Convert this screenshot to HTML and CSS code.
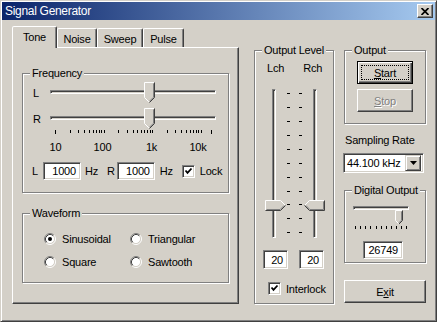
FILE: index.html
```html
<!DOCTYPE html>
<html>
<head>
<meta charset="utf-8">
<title>Signal Generator</title>
<link rel="stylesheet" href="styles.css">
</head>
<body>
<div class="window">
  <div class="titlebar">
    <span class="title">Signal Generator</span>
    <span class="close"><svg width="8" height="7" viewBox="0 0 8 7"><path d="M0.5 0 L7.5 7 M7.5 0 L0.5 7" stroke="#000" stroke-width="1.7"/></svg></span>
  </div>
  <div class="main">
    <div class="tabctl">
      <div class="tabs">
        <div class="tab active t-tone">Tone</div>
        <div class="tab t-noise">Noise</div>
        <div class="tab t-sweep">Sweep</div>
        <div class="tab t-pulse">Pulse</div>
      </div>
      <div class="panel">
        <fieldset class="group freq">
          <legend>Frequency</legend>
          <div class="srow first">
            <span class="slabel">L</span>
            <div class="hslider">
              <div class="track"></div>
              <svg class="thumb" style="left:99px" width="11" height="21" viewBox="0 0 11 21">
                <path d="M0.5 15.5V0.5H10.5V15.5L5.5 20.5Z" fill="#D4D0C8"/>
                <path d="M0.5 15.5V0.5H10" stroke="#fff" fill="none"/>
                <path d="M0.5 15.5L5 20" stroke="#fff" fill="none"/>
                <path d="M10.5 0.5V15.5L5.5 20.5" stroke="#404040" fill="none"/>
                <path d="M9.5 1.5V15.2L5.5 19.2" stroke="#808080" fill="none"/>
              </svg>
            </div>
          </div>
          <div class="srow">
            <span class="slabel">R</span>
            <div class="hslider">
              <div class="track"></div>
              <svg class="thumb" style="left:99px" width="11" height="21" viewBox="0 0 11 21">
                <path d="M0.5 15.5V0.5H10.5V15.5L5.5 20.5Z" fill="#D4D0C8"/>
                <path d="M0.5 15.5V0.5H10" stroke="#fff" fill="none"/>
                <path d="M0.5 15.5L5 20" stroke="#fff" fill="none"/>
                <path d="M10.5 0.5V15.5L5.5 20.5" stroke="#404040" fill="none"/>
                <path d="M9.5 1.5V15.2L5.5 19.2" stroke="#808080" fill="none"/>
              </svg>
            </div>
          </div>
          <svg class="scale" width="205" height="25" viewBox="0 0 205 25">
            <g fill="#000">
              <rect x="32" y="1" width="1" height="4"/>
              <rect x="47" y="1" width="1" height="3"/><rect x="55" y="1" width="1" height="3"/><rect x="61" y="1" width="1" height="3"/><rect x="66" y="1" width="1" height="3"/><rect x="70" y="1" width="1" height="3"/><rect x="73" y="1" width="1" height="3"/><rect x="76" y="1" width="1" height="3"/><rect x="78" y="1" width="1" height="3"/>
              <rect x="81" y="1" width="1" height="3"/><rect x="95" y="1" width="1" height="3"/><rect x="104" y="1" width="1" height="3"/><rect x="110" y="1" width="1" height="3"/><rect x="114" y="1" width="1" height="3"/><rect x="118" y="1" width="1" height="3"/><rect x="121" y="1" width="1" height="3"/><rect x="124" y="1" width="1" height="3"/><rect x="127" y="1" width="1" height="3"/>
              <rect x="129" y="1" width="1" height="3"/><rect x="144" y="1" width="1" height="3"/><rect x="152" y="1" width="1" height="3"/><rect x="158" y="1" width="1" height="3"/><rect x="163" y="1" width="1" height="3"/><rect x="167" y="1" width="1" height="3"/><rect x="170" y="1" width="1" height="3"/><rect x="173" y="1" width="1" height="3"/><rect x="175" y="1" width="1" height="3"/>
              <rect x="178" y="1" width="1" height="3"/>
              <rect x="188" y="1" width="1" height="4"/>
            </g>
            <g class="scale-text">
              <text x="32.5" y="22" text-anchor="middle">10</text>
              <text x="79.5" y="22" text-anchor="middle">100</text>
              <text x="128.5" y="22" text-anchor="middle">1k</text>
              <text x="175" y="22" text-anchor="middle">10k</text>
            </g>
          </svg>
          <div class="erow">
            <span>L</span>
            <span class="edit e-freq ml5">1000</span>
            <span class="ml4">Hz</span>
            <span class="ml9">R</span>
            <span class="edit e-freq ml2">1000</span>
            <span class="ml5">Hz</span>
            <span class="check ml9"><svg width="9" height="9" viewBox="0 0 9 9"><path d="M1.5 3.5L3.5 5.8L7.5 1.5" stroke="#000" stroke-width="1.8" fill="none"/></svg></span>
            <span class="ml5">Lock</span>
          </div>
        </fieldset>
        <fieldset class="group wave">
          <legend>Waveform</legend>
          <div class="radios">
            <label class="radio"><svg width="12" height="12" viewBox="0 0 12 12"><circle cx="6" cy="6" r="4.5" fill="#fff"/><path d="M2.11 9.89A5.5 5.5 0 0 1 9.89 2.11" stroke="#808080" fill="none"/><path d="M9.89 2.11A5.5 5.5 0 0 1 2.11 9.89" stroke="#fff" fill="none"/><path d="M2.82 9.18A4.5 4.5 0 0 1 9.18 2.82" stroke="#404040" fill="none"/><path d="M9.18 2.82A4.5 4.5 0 0 1 2.82 9.18" stroke="#D4D0C8" fill="none"/><circle cx="6" cy="6" r="2" fill="#000"/></svg><span>Sinusoidal</span></label>
            <label class="radio"><svg width="12" height="12" viewBox="0 0 12 12"><circle cx="6" cy="6" r="4.5" fill="#fff"/><path d="M2.11 9.89A5.5 5.5 0 0 1 9.89 2.11" stroke="#808080" fill="none"/><path d="M9.89 2.11A5.5 5.5 0 0 1 2.11 9.89" stroke="#fff" fill="none"/><path d="M2.82 9.18A4.5 4.5 0 0 1 9.18 2.82" stroke="#404040" fill="none"/><path d="M9.18 2.82A4.5 4.5 0 0 1 2.82 9.18" stroke="#D4D0C8" fill="none"/></svg><span>Triangular</span></label>
            <label class="radio"><svg width="12" height="12" viewBox="0 0 12 12"><circle cx="6" cy="6" r="4.5" fill="#fff"/><path d="M2.11 9.89A5.5 5.5 0 0 1 9.89 2.11" stroke="#808080" fill="none"/><path d="M9.89 2.11A5.5 5.5 0 0 1 2.11 9.89" stroke="#fff" fill="none"/><path d="M2.82 9.18A4.5 4.5 0 0 1 9.18 2.82" stroke="#404040" fill="none"/><path d="M9.18 2.82A4.5 4.5 0 0 1 2.82 9.18" stroke="#D4D0C8" fill="none"/></svg><span>Square</span></label>
            <label class="radio"><svg width="12" height="12" viewBox="0 0 12 12"><circle cx="6" cy="6" r="4.5" fill="#fff"/><path d="M2.11 9.89A5.5 5.5 0 0 1 9.89 2.11" stroke="#808080" fill="none"/><path d="M9.89 2.11A5.5 5.5 0 0 1 2.11 9.89" stroke="#fff" fill="none"/><path d="M2.82 9.18A4.5 4.5 0 0 1 9.18 2.82" stroke="#404040" fill="none"/><path d="M9.18 2.82A4.5 4.5 0 0 1 2.82 9.18" stroke="#D4D0C8" fill="none"/></svg><span>Sawtooth</span></label>
          </div>
        </fieldset>
      </div>
    </div>

    <fieldset class="group olevel">
      <legend>Output Level</legend>
      <div class="chlabels"><span>Lch</span><span class="rch">Rch</span></div>
      <div class="vsliders">
        <div class="vslider vl">
          <div class="vtrack"></div>
          <svg class="vthumb" style="top:111px;left:0" width="22" height="11" viewBox="0 0 22 11">
            <path d="M0.5 0.5H15.5L20.5 5.5L15.5 10.5H0.5Z" fill="#D4D0C8"/>
            <path d="M0.5 10V0.5H15.5L20 5" stroke="#fff" fill="none"/>
            <path d="M0.5 10.5H15.5L20.5 5.5" stroke="#404040" fill="none"/>
            <path d="M1.5 9.5H15.1L19.1 5.5" stroke="#808080" fill="none"/>
          </svg>
        </div>
        <svg class="vticks" width="16" height="149" viewBox="0 0 16 149">
          <g fill="#000">
            <rect x="0" y="4" width="3" height="1"/><rect x="12" y="4" width="3" height="1"/>
            <rect x="0" y="18" width="3" height="1"/><rect x="12" y="18" width="3" height="1"/>
            <rect x="0" y="32" width="3" height="1"/><rect x="12" y="32" width="3" height="1"/>
            <rect x="0" y="46" width="3" height="1"/><rect x="12" y="46" width="3" height="1"/>
            <rect x="0" y="60" width="3" height="1"/><rect x="12" y="60" width="3" height="1"/>
            <rect x="0" y="74" width="3" height="1"/><rect x="12" y="74" width="3" height="1"/>
            <rect x="0" y="88" width="3" height="1"/><rect x="12" y="88" width="3" height="1"/>
            <rect x="0" y="102" width="3" height="1"/><rect x="12" y="102" width="3" height="1"/>
            <rect x="0" y="115" width="3" height="1"/><rect x="12" y="115" width="3" height="1"/>
            <rect x="0" y="129" width="3" height="1"/><rect x="12" y="129" width="3" height="1"/>
            <rect x="0" y="143" width="3" height="1"/><rect x="12" y="143" width="3" height="1"/>
          </g>
        </svg>
        <div class="vslider vr">
          <div class="vtrack"></div>
          <svg class="vthumb" style="top:111px;left:1px" width="21" height="11" viewBox="0 0 21 11">
            <path d="M20.5 0.5H5.5L0.5 5.5L5.5 10.5H20.5Z" fill="#D4D0C8"/>
            <path d="M1 5L5.5 0.5H20" stroke="#fff" fill="none"/>
            <path d="M20.5 0.5V10.5H5.5L0.5 5.5" stroke="#404040" fill="none"/>
            <path d="M19.5 1.5V9.5H5.9L1.9 5.5" stroke="#808080" fill="none"/>
          </svg>
        </div>
      </div>
      <div class="levels">
        <span class="edit e-lvl">20</span>
        <span class="edit e-lvl ml11">20</span>
      </div>
      <div class="interlock">
        <span class="check"><svg width="9" height="9" viewBox="0 0 9 9"><path d="M1.5 3.5L3.5 5.8L7.5 1.5" stroke="#000" stroke-width="1.8" fill="none"/></svg></span>
        <span class="ml5">Interlock</span>
      </div>
    </fieldset>

    <div class="rcol">
      <fieldset class="group output">
        <legend>Output</legend>
        <div class="btn default focus b-out"><span><u>S</u>tart</span></div>
        <div class="btn disabled b-out b-stop"><span><u>S</u>top</span></div>
      </fieldset>
      <div class="srate">Sampling Rate</div>
      <div class="combo">
        <span class="combo-text">44.100 kHz</span>
        <span class="combo-btn"><svg width="7" height="4" viewBox="0 0 7 4"><path d="M0 0H7L3.5 4Z" fill="#000"/></svg></span>
      </div>
      <fieldset class="group digital">
        <legend>Digital Output</legend>
        <div class="dslider">
          <div class="track"></div>
          <svg class="thumb" style="left:45px;top:4px" width="8" height="15" viewBox="0 0 8 15">
            <path d="M0.5 10.5V0.5H7.5V10.5L4 14Z" fill="#D4D0C8"/>
            <path d="M0.5 10.5V0.5H7" stroke="#fff" fill="none"/>
            <path d="M0.5 10.5L3.5 13.5" stroke="#fff" fill="none"/>
            <path d="M7.5 0.5V10.5L4 14" stroke="#404040" fill="none"/>
            <path d="M6.5 1.5V10.2L3.9 12.8" stroke="#808080" fill="none"/>
          </svg>
        </div>
        <svg class="dticks" width="62" height="4" viewBox="0 0 62 4">
          <g fill="#000">
            <rect x="5" y="0" width="1" height="3"/><rect x="10" y="0" width="1" height="3"/><rect x="15" y="0" width="1" height="3"/><rect x="20" y="0" width="1" height="3"/><rect x="26" y="0" width="1" height="3"/><rect x="31" y="0" width="1" height="3"/><rect x="36" y="0" width="1" height="3"/><rect x="41" y="0" width="1" height="3"/><rect x="46" y="0" width="1" height="3"/><rect x="51" y="0" width="1" height="3"/><rect x="56" y="0" width="1" height="3"/>
          </g>
        </svg>
        <span class="edit e-dig">26749</span>
      </fieldset>
      <div class="btn b-exit"><span>E<u>x</u>it</span></div>
    </div>
  </div>
</div>
</body>
</html>
```
FILE: styles.css
```css
* { box-sizing: border-box; }
html, body { margin: 0; padding: 0; }
body {
  background: #D4D0C8;
  font-family: "Liberation Sans", Arial, sans-serif;
  font-size: 11px;
  letter-spacing: -0.2px;
  line-height: 14px;
  color: #000;
  width: 437px;
  height: 322px;
  overflow: hidden;
}
.window {
  width: 437px;
  height: 322px;
  border: 1px solid;
  border-color: #D4D0C8 #404040 #404040 #D4D0C8;
  box-shadow: inset 1px 1px #fff, inset -1px -1px #808080;
  padding: 1px;
  display: flex;
  flex-direction: column;
}
.titlebar {
  height: 18px;
  background: linear-gradient(to right, #0A246A, #A6CAF0);
  display: flex;
  align-items: center;
  padding: 0 2px 0 3px;
  color: #fff;
  font-size: 12px;
  letter-spacing: -0.3px;
}
.title { flex: 1; }
.close {
  width: 16px;
  height: 14px;
  background: #D4D0C8;
  border: 1px solid;
  border-color: #fff #404040 #404040 #fff;
  box-shadow: inset -1px -1px #808080;
  display: flex;
  align-items: center;
  justify-content: center;
}
.close svg { display: block; }
.main {
  display: flex;
  align-items: flex-start;
  padding: 6px 0 0 10px;
}
.tabctl { width: 227px; }
.tabs {
  display: flex;
  align-items: flex-end;
  height: 21px;
}
.tab {
  height: 19px;
  border: 1px solid;
  border-bottom: 0;
  border-color: #fff #404040 transparent #fff;
  box-shadow: inset -1px 0 #808080;
  border-radius: 2px 2px 0 0;
  display: flex;
  align-items: center;
  justify-content: center;
  padding-top: 1px;
}
.tab.active {
  height: 22px;
  margin-bottom: -1px;
  position: relative;
  z-index: 1;
  background: #D4D0C8;
  padding-top: 0;
  padding-bottom: 2px;
}
.t-tone { width: 45px; }
.t-noise { width: 40px; }
.t-sweep { width: 46px; }
.t-pulse { width: 41px; }
.panel {
  height: 257px;
  border: 1px solid;
  border-color: #fff #404040 #404040 #fff;
  box-shadow: inset -1px -1px #808080;
  padding: 18px 8px 0 9px;
}
.group {
  margin: 0;
  padding: 0;
  border: 1px solid #808080;
  box-shadow: inset 1px 1px #fff, 1px 1px #fff;
  min-width: 0;
}
.group legend {
  padding: 0 2px;
  margin-left: 7px;
  background: #D4D0C8;
  line-height: 14px;
}
.freq { width: 207px; height: 127px; }
.srow {
  display: flex;
  align-items: flex-start;
  height: 22px;
  padding-left: 10px;
  margin-top: 4px;
}
.srow.first { margin-top: 1px; }
.slabel { width: 12px; padding-top: 5px; }
.hslider { position: relative; width: 176px; height: 22px; }
.track {
  margin: 9px 5px 0;
  height: 4px;
  border: 1px solid;
  border-color: #808080 #fff #fff #808080;
  box-shadow: inset 1px 1px #404040, inset -1px -1px #D4D0C8;
}
.thumb { position: absolute; top: 1px; display: block; }
.scale { display: block; }
.scale-text text { font-family: "Liberation Sans", Arial, sans-serif; font-size: 11px; fill: #000; }
.erow {
  display: flex;
  align-items: center;
  height: 18px;
  padding-left: 9px;
  margin-top: 8px;
}
.ml2 { margin-left: 2px; }
.ml4 { margin-left: 4px; }
.ml5 { margin-left: 5px; }
.ml9 { margin-left: 9px; }
.ml11 { margin-left: 11px; }
.edit {
  display: flex;
  align-items: center;
  justify-content: flex-end;
  background: #fff;
  border: 1px solid;
  border-color: #808080 #fff #fff #808080;
  box-shadow: inset 1px 1px #404040, inset -1px -1px #D4D0C8;
  padding-right: 4px;
}
.e-freq { width: 38px; height: 18px; }
.check {
  width: 13px;
  height: 13px;
  background: #fff;
  border: 1px solid;
  border-color: #808080 #fff #fff #808080;
  box-shadow: inset 1px 1px #404040, inset -1px -1px #D4D0C8;
  padding: 1px;
  display: flex;
}
.check svg { display: block; }
.wave { width: 207px; height: 77px; margin-top: 13px; }
.radios {
  display: grid;
  grid-template-columns: 86px 80px;
  grid-auto-rows: 14px;
  row-gap: 9px;
  padding: 12px 0 0 21px;
}
.radio { display: flex; align-items: center; gap: 6px; }
.radio svg { display: block; flex: none; }

.olevel { width: 80px; height: 261px; margin: 17px 0 0 15px; }
.chlabels { display: flex; padding-left: 12px; margin-top: 4px; }
.rch { margin-left: 19px; }
.vsliders { display: flex; margin-top: 14px; height: 149px; }
.vslider { position: relative; width: 22px; height: 149px; }
.vl { margin-left: 10px; }
.vl .vtrack { margin-left: 7px; }
.vr .vtrack { margin-left: 10px; }
.vtrack {
  width: 4px;
  height: 149px;
  border: 1px solid;
  border-color: #808080 #fff #fff #808080;
  box-shadow: inset 1px 1px #404040, inset -1px -1px #D4D0C8;
}
.vthumb { position: absolute; display: block; }
.vticks { display: block; }
.levels { display: flex; margin-top: 12px; padding-left: 8px; }
.e-lvl { width: 25px; height: 19px; }
.interlock { display: flex; align-items: center; margin-top: 13px; padding-left: 13px; height: 13px; }

.rcol { width: 82px; margin-left: 10px; }
.output { height: 81px; margin-top: 17px; }
.btn {
  display: flex;
  align-items: center;
  justify-content: center;
  background: #D4D0C8;
  border: 1px solid;
  border-color: #fff #404040 #404040 #fff;
  box-shadow: inset -1px -1px #808080;
  position: relative;
}
.btn.default {
  border: 1px solid #000;
  box-shadow: inset 1px 1px #fff, inset -1px -1px #404040, inset -2px -2px #808080;
}
.btn.focus::after {
  content: "";
  position: absolute;
  left: 3px; top: 3px; right: 3px; bottom: 3px;
  border: 1px dotted #000;
}
.btn.disabled { color: #808080; text-shadow: 1px 1px #fff; }
.b-out { width: 56px; height: 23px; margin: 4px 0 0 12px; }
.b-stop { margin-top: 5px; }
.srate { margin-top: 9px; padding-left: 1px; }
.combo {
  display: flex;
  align-items: center;
  width: 81px;
  height: 20px;
  margin: 6px 0 0 -1px;
  background: #fff;
  border: 1px solid;
  border-color: #808080 #fff #fff #808080;
  box-shadow: inset 1px 1px #404040, inset -1px -1px #D4D0C8;
  padding: 2px;
}
.combo-text { flex: 1; padding-left: 1px; }
.combo-btn {
  width: 16px;
  height: 16px;
  background: #D4D0C8;
  border: 1px solid;
  border-color: #D4D0C8 #404040 #404040 #D4D0C8;
  box-shadow: inset 1px 1px #fff, inset -1px -1px #808080;
  display: flex;
  align-items: center;
  justify-content: center;
}
.combo-btn svg { display: block; }
.digital { height: 80px; margin-top: 10px; }
.dslider { position: relative; width: 62px; height: 20px; margin: 6px 0 0 5px; }
.dslider .track { margin: 9px 3px 0; }
.dticks { display: block; margin-left: 5px; }
.e-dig { width: 40px; height: 18px; margin: 11px 0 0 18px; }
.b-exit { width: 82px; height: 23px; margin-top: 17px; }
```
